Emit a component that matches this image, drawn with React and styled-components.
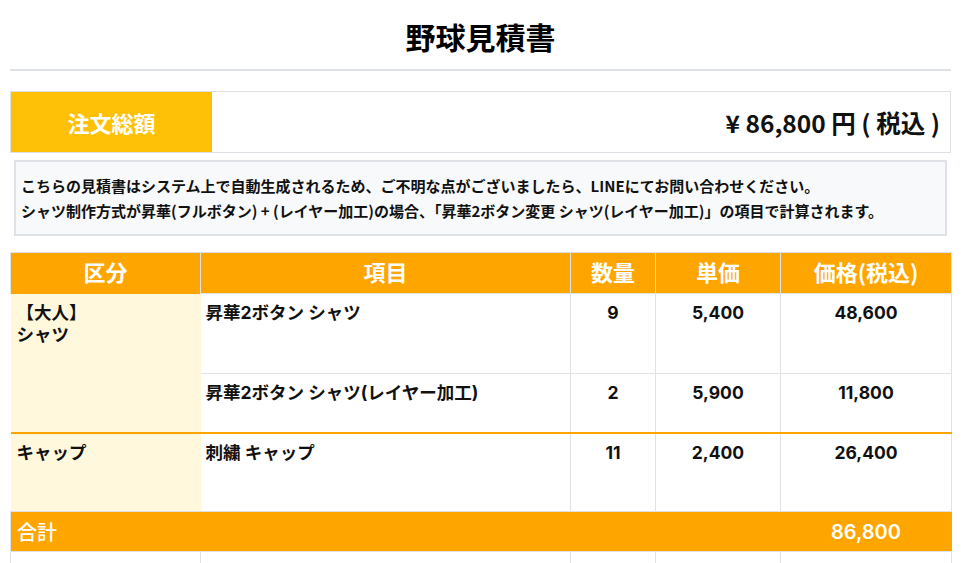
import styled, { createGlobalStyle } from "styled-components";

const GlobalStyle = createGlobalStyle`
  body {
    margin: 0;
    background: #fff;
    font-family: "Noto Sans CJK JP", sans-serif;
    color: #111;
  }
`;

const rows = [
  {
    category: ["【大人】", "シャツ"],
    items: [
      { name: "昇華2ボタン シャツ", qty: "9", unit: "5,400", price: "48,600", height: 80 },
      { name: "昇華2ボタン シャツ(レイヤー加工)", qty: "2", unit: "5,900", price: "11,800", height: 59 },
    ],
  },
  {
    category: ["キャップ"],
    items: [
      { name: "刺繍 キャップ", qty: "11", unit: "2,400", price: "26,400", height: 79 },
    ],
  },
];

const App = () => {
  return (
    <Page>
      <GlobalStyle />
      <Title>野球見積書</Title>

      <TotalBox>
        <TotalLabel>注文総額</TotalLabel>
        <TotalAmount>¥ 86,800 円 ( 税込 )</TotalAmount>
      </TotalBox>

      <Note>
        こちらの見積書はシステム上で自動生成されるため、ご不明な点がございましたら、LINEにてお問い合わせください。
        <br />
        シャツ制作方式が昇華(フルボタン) + (レイヤー加工)の場合、「昇華2ボタン変更 シャツ(レイヤー加工)」の項目で計算されます。
      </Note>

      <Table>
        <colgroup>
          <col style={{ width: 190 }} />
          <col style={{ width: 370 }} />
          <col style={{ width: 85 }} />
          <col style={{ width: 125 }} />
          <col style={{ width: 171 }} />
        </colgroup>
        <thead>
          <tr>
            <Th>区分</Th>
            <Th>項目</Th>
            <Th>数量</Th>
            <Th>単価</Th>
            <Th>価格(税込)</Th>
          </tr>
        </thead>
        <tbody>
          {rows.map((group, gi) =>
            group.items.map((item, i) => (
              <Row key={`${gi}-${i}`} $h={item.height} $groupStart={i === 0 && gi > 0}>
                {i === 0 && (
                  <Category rowSpan={group.items.length}>
                    {group.category.map((line) => (
                      <div key={line}>{line}</div>
                    ))}
                  </Category>
                )}
                <Item>{item.name}</Item>
                <Num>{item.qty}</Num>
                <Num>{item.unit}</Num>
                <Num>{item.price}</Num>
              </Row>
            ))
          )}
          <SumRow>
            <SumLabel colSpan={4}>合計</SumLabel>
            <SumValue>86,800</SumValue>
          </SumRow>
          <EmptyRow>
            <Blank />
            <Blank />
            <Blank />
            <Blank />
            <Blank />
          </EmptyRow>
        </tbody>
      </Table>
    </Page>
  );
};

export default App;

const Page = styled.div`
  padding: 0 10px;
`;

const Title = styled.h1`
  margin: 0;
  padding: 18px 0 15px;
  font-size: 30px;
  line-height: 36px;
  font-weight: 700;
  text-align: center;
  color: #000;
  border-bottom: 2px solid #dee2e6;
`;

const TotalBox = styled.div`
  display: flex;
  margin-top: 20px;
  height: 60px;
  border: 1px solid #dee2e6;
`;

const TotalLabel = styled.div`
  width: 201px;
  display: flex;
  align-items: center;
  justify-content: center;
  background: #ffc107;
  color: #fff;
  font-size: 22px;
  font-weight: 700;
`;

const TotalAmount = styled.div`
  flex: 1;
  display: flex;
  align-items: center;
  justify-content: flex-end;
  padding-right: 10px;
  font-size: 24.5px;
  font-weight: 700;
  color: #111;
`;

const Note = styled.div`
  margin: 7px 4px 0;
  padding: 11px 5px;
  background: #f8f9fa;
  border: 2px solid #dee2e6;
  font-size: 15px;
  font-weight: 700;
  line-height: 25px;
  color: #111;
`;

const Table = styled.table`
  width: 100%;
  margin-top: 16px;
  border-collapse: collapse;
  table-layout: fixed;
  font-family: Inter, "Noto Sans CJK JP", sans-serif;
`;

const Th = styled.th`
  height: 36px;
  padding: 0 0 4px;
  background: #ffa500;
  color: #fff;
  font-family: "Noto Sans CJK JP", sans-serif;
  font-size: 22px;
  line-height: 30px;
  font-weight: 700;
  text-align: center;
  vertical-align: middle;
  border: 1px solid #dee2e6;
  border-bottom: none;
`;

const Row = styled.tr`
  height: ${(p) => p.$h}px;
  border-top: ${(p) => (p.$groupStart ? "2px solid #ffa500" : "none")};
`;

const Cell = styled.td`
  padding: 8px 5px;
  vertical-align: top;
  font-size: 17.5px;
  font-weight: 700;
  line-height: 22px;
  color: #111;
  border-top: 1px solid #e3e3e3;
  border-right: 1px solid #dee2e6;
`;

const Category = styled(Cell)`
  padding-left: 6px;
  background: #fff8dc;
  border: none;
`;

const Item = styled(Cell)`
  text-align: left;
`;

const Num = styled(Cell)`
  text-align: center;
`;

const SumRow = styled.tr`
  height: 40px;
  background: #ffa500;
  color: #fff;
  border-top: 1px solid #dee2e6;
  border-bottom: 1px solid #dee2e6;
`;

const SumLabel = styled.td`
  padding: 0 6px;
  font-family: "Noto Sans CJK JP", sans-serif;
  font-size: 20px;
  font-weight: 500;
  border-left: 1px solid #dee2e6;
`;

const SumValue = styled.td`
  text-align: center;
  font-size: 20px;
  font-weight: 600;
`;

const EmptyRow = styled.tr`
  height: 40px;
`;

const Blank = styled.td`
  border-left: 1px solid #dee2e6;
  border-right: 1px solid #dee2e6;
`;
